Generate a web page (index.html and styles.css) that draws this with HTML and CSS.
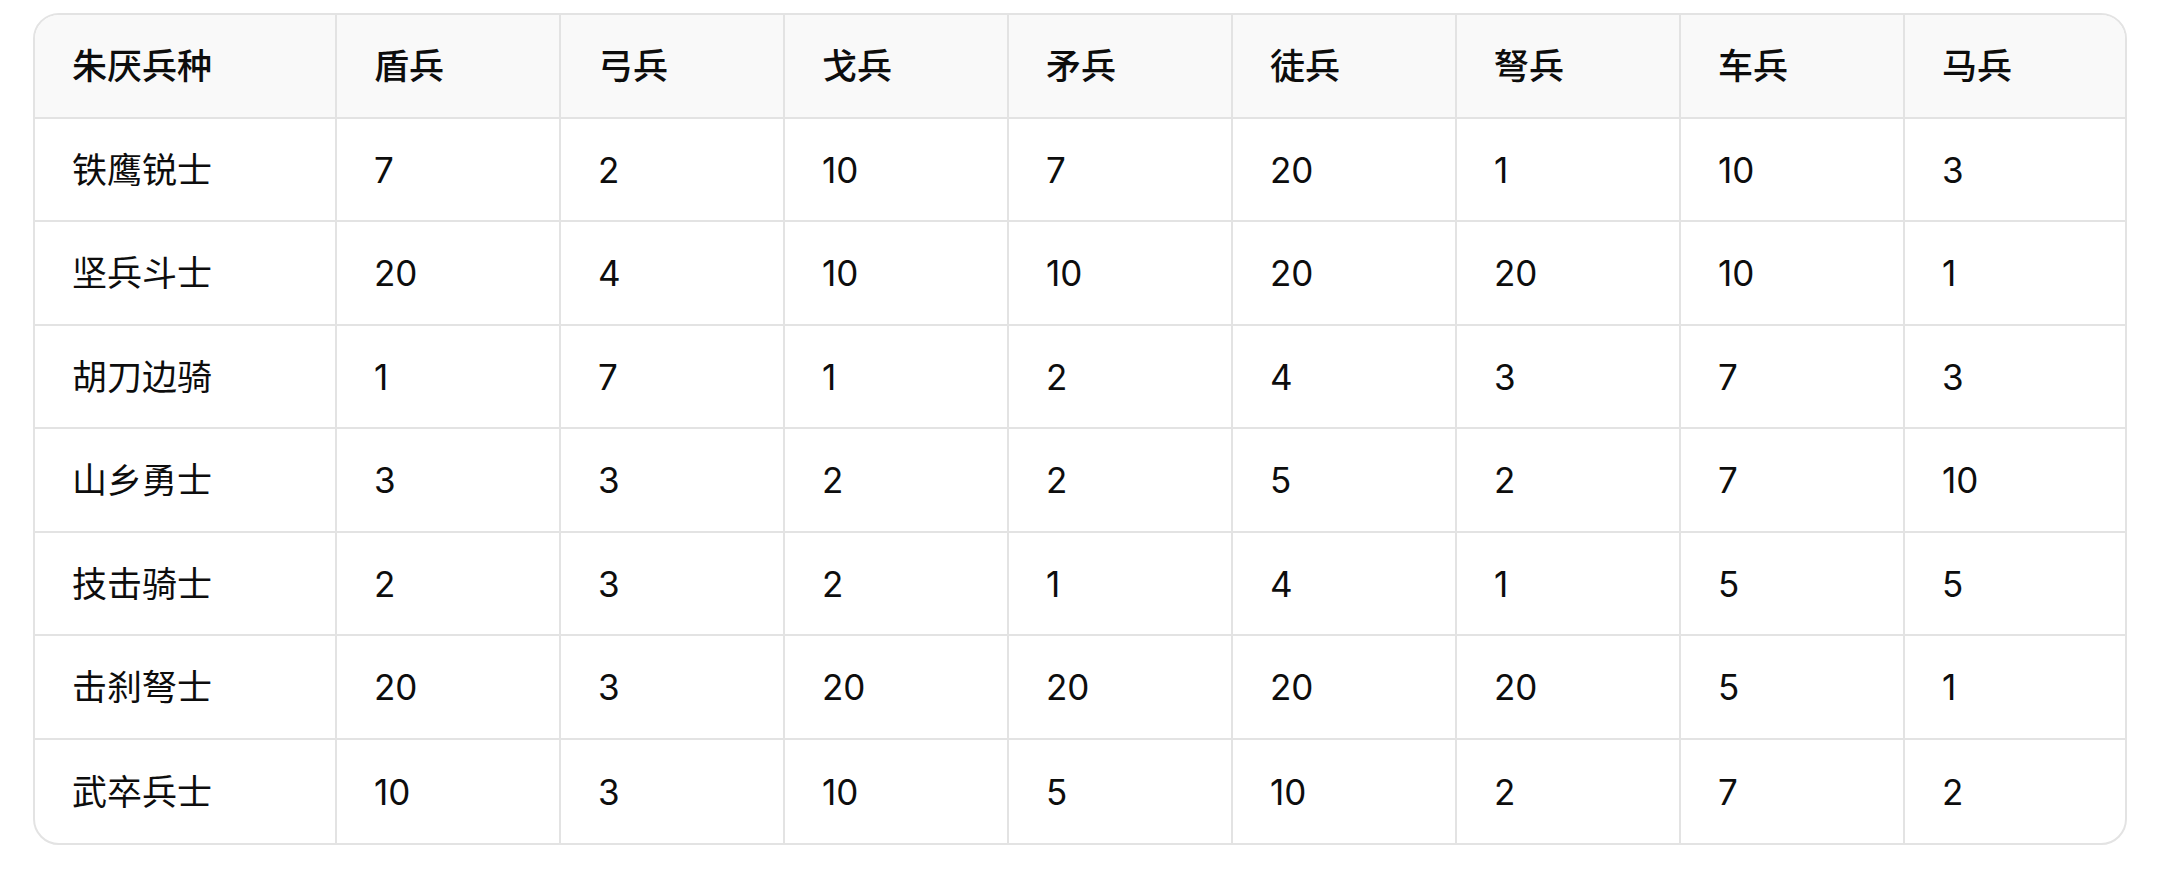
FILE: index.html
```html
<!DOCTYPE html>
<html lang="zh-CN">
<head>
<meta charset="utf-8">
<title>朱厌兵种</title>
<link rel="stylesheet" href="styles.css">
</head>
<body>
<div class="table-wrap">
  <table class="grid">
    <colgroup>
      <col class="c-first">
      <col class="c-num"><col class="c-num"><col class="c-num"><col class="c-num"><col class="c-num"><col class="c-num"><col class="c-num"><col>
    </colgroup>
    <thead>
      <tr><th>朱厌兵种</th><th>盾兵</th><th>弓兵</th><th>戈兵</th><th>矛兵</th><th>徒兵</th><th>弩兵</th><th>车兵</th><th>马兵</th></tr>
    </thead>
    <tbody>
      <tr><td>铁鹰锐士</td><td>7</td><td>2</td><td>10</td><td>7</td><td>20</td><td>1</td><td>10</td><td>3</td></tr>
      <tr><td>坚兵斗士</td><td>20</td><td>4</td><td>10</td><td>10</td><td>20</td><td>20</td><td>10</td><td>1</td></tr>
      <tr><td>胡刀边骑</td><td>1</td><td>7</td><td>1</td><td>2</td><td>4</td><td>3</td><td>7</td><td>3</td></tr>
      <tr><td>山乡勇士</td><td>3</td><td>3</td><td>2</td><td>2</td><td>5</td><td>2</td><td>7</td><td>10</td></tr>
      <tr><td>技击骑士</td><td>2</td><td>3</td><td>2</td><td>1</td><td>4</td><td>1</td><td>5</td><td>5</td></tr>
      <tr><td>击刹弩士</td><td>20</td><td>3</td><td>20</td><td>20</td><td>20</td><td>20</td><td>5</td><td>1</td></tr>
      <tr><td>武卒兵士</td><td>10</td><td>3</td><td>10</td><td>5</td><td>10</td><td>2</td><td>7</td><td>2</td></tr>
    </tbody>
  </table>
</div>
</body>
</html>
```

FILE: styles.css
```css
html, body {
  margin: 0;
  padding: 0;
  background: #ffffff;
}

body {
  padding: 13px 0 0 33px;
  font-family: "Inter", "Noto Sans CJK SC", sans-serif;
  color: #0d0d0d;
}

.table-wrap {
  width: 2094px;
  border: 2px solid #e3e3e3;
  border-radius: 26px;
  overflow: hidden;
  box-sizing: border-box;
}

.grid {
  width: 100%;
  border-collapse: separate;
  border-spacing: 0;
  table-layout: fixed;
}

.c-first {
  width: 302px;
}

.c-num {
  width: 224px;
}

.grid th,
.grid td {
  box-sizing: border-box;
  text-align: left;
  vertical-align: middle;
  padding: 0 0 0 37px;
  font-size: 35px;
  line-height: 40px;
  border-right: 2px solid #e3e3e3;
  border-bottom: 2px solid #e3e3e3;
}

.grid th:last-child,
.grid td:last-child {
  border-right: none;
}

.grid tbody tr:last-child td {
  border-bottom: none;
}

.grid thead th {
  height: 104px;
  background: #f9f9f9;
  font-weight: 500;
}

.grid tbody td {
  height: 103px;
  font-weight: 400;
}

.grid tbody tr:nth-child(even) td {
  height: 104px;
}
```
